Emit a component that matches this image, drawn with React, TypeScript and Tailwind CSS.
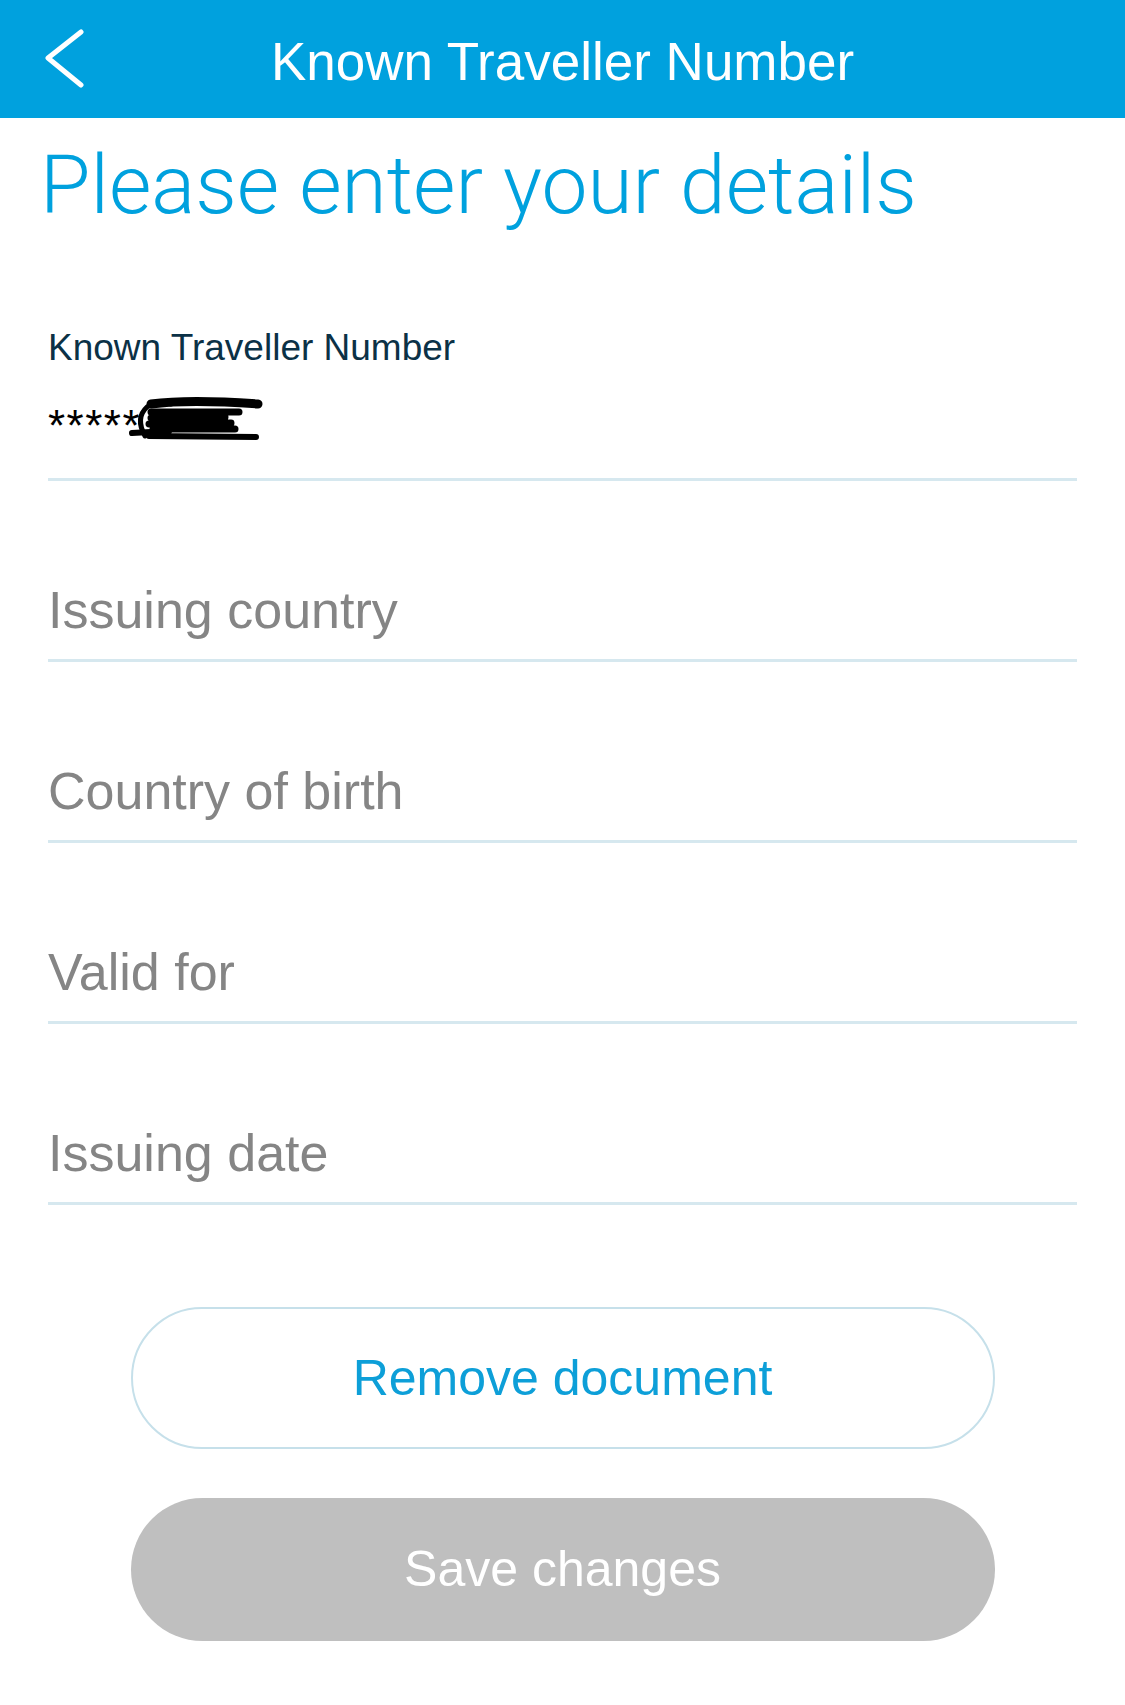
import React from 'react';

const Field = ({ label }: { label: string }) => (
    <div className="h-[181px] flex items-end pb-[23px] border-b-[3px] border-[#d6e8ef]">
        <span className="text-[52px] leading-none text-[#858585] font-['Liberation_Sans',sans-serif]">{label}</span>
    </div>
);

const Scribble = () => (
    <svg width="134" height="45" viewBox="0 0 134 45" className="-ml-[12px] -mt-[8px]">
        <g fill="none" stroke="#000" strokeLinecap="round" strokeLinejoin="round">
            <path d="M22 8 Q60 3 129 8" strokeWidth="9" />
            <path d="M16 40 Q6 22 18 11 Q28 4 42 8" strokeWidth="5" />
            <path d="M22 16 L110 16 M22 22 L96 21 M20 28 L102 27 M24 33 L106 33" strokeWidth="7" />
            <path d="M3 37 L40 35 M20 40 L127 41" strokeWidth="6" />
        </g>
    </svg>
);

export default function App() {
    return (
        <div className="w-[1125px] h-[1705px] bg-white overflow-hidden">
            <header className="h-[118px] bg-[#00a1de] grid grid-cols-[1fr_auto_1fr] items-center">
                <div className="pl-[44px]">
                    <svg width="40" height="60" viewBox="0 0 40 60">
                        <polyline points="37,3 4,29 37,56" fill="none" stroke="#fff" strokeWidth="5" strokeLinecap="round" strokeLinejoin="round" />
                    </svg>
                </div>
                <h1 className="text-[53px] leading-none text-white font-['Liberation_Sans',sans-serif] pt-[4px]">Known Traveller Number</h1>
                <div />
            </header>

            <h2 className="mt-[26px] pl-[40px] text-[82px] leading-none font-light text-[#00a1de] font-['Roboto',sans-serif]">
                Please enter your details
            </h2>

            <div className="px-12">
                <div className="pt-[103px] pb-[32px] border-b-[3px] border-[#d6e8ef]">
                    <div className="text-[37px] leading-none text-[#0b3146] font-['Liberation_Sans',sans-serif]">Known Traveller Number</div>
                    <div className="mt-[38px] flex items-start h-[42px]">
                        <span className="text-[44px] leading-none tracking-[1.5px] text-black font-['Liberation_Sans',sans-serif]">*****</span>
                        <Scribble />
                    </div>
                </div>
                <Field label="Issuing country" />
                <Field label="Country of birth" />
                <Field label="Valid for" />
                <Field label="Issuing date" />
            </div>

            <div className="mt-[102px] flex flex-col items-center gap-[49px]">
                <button className="w-[864px] h-[142px] rounded-full border-2 border-[#c6e0ea] bg-white text-[50px] text-[#0d9fd8] font-['Liberation_Sans',sans-serif]">
                    Remove document
                </button>
                <button className="w-[864px] h-[143px] rounded-full bg-[#bfbfbf] text-[50px] text-white font-['Liberation_Sans',sans-serif]">
                    Save changes
                </button>
            </div>
        </div>
    );
}
